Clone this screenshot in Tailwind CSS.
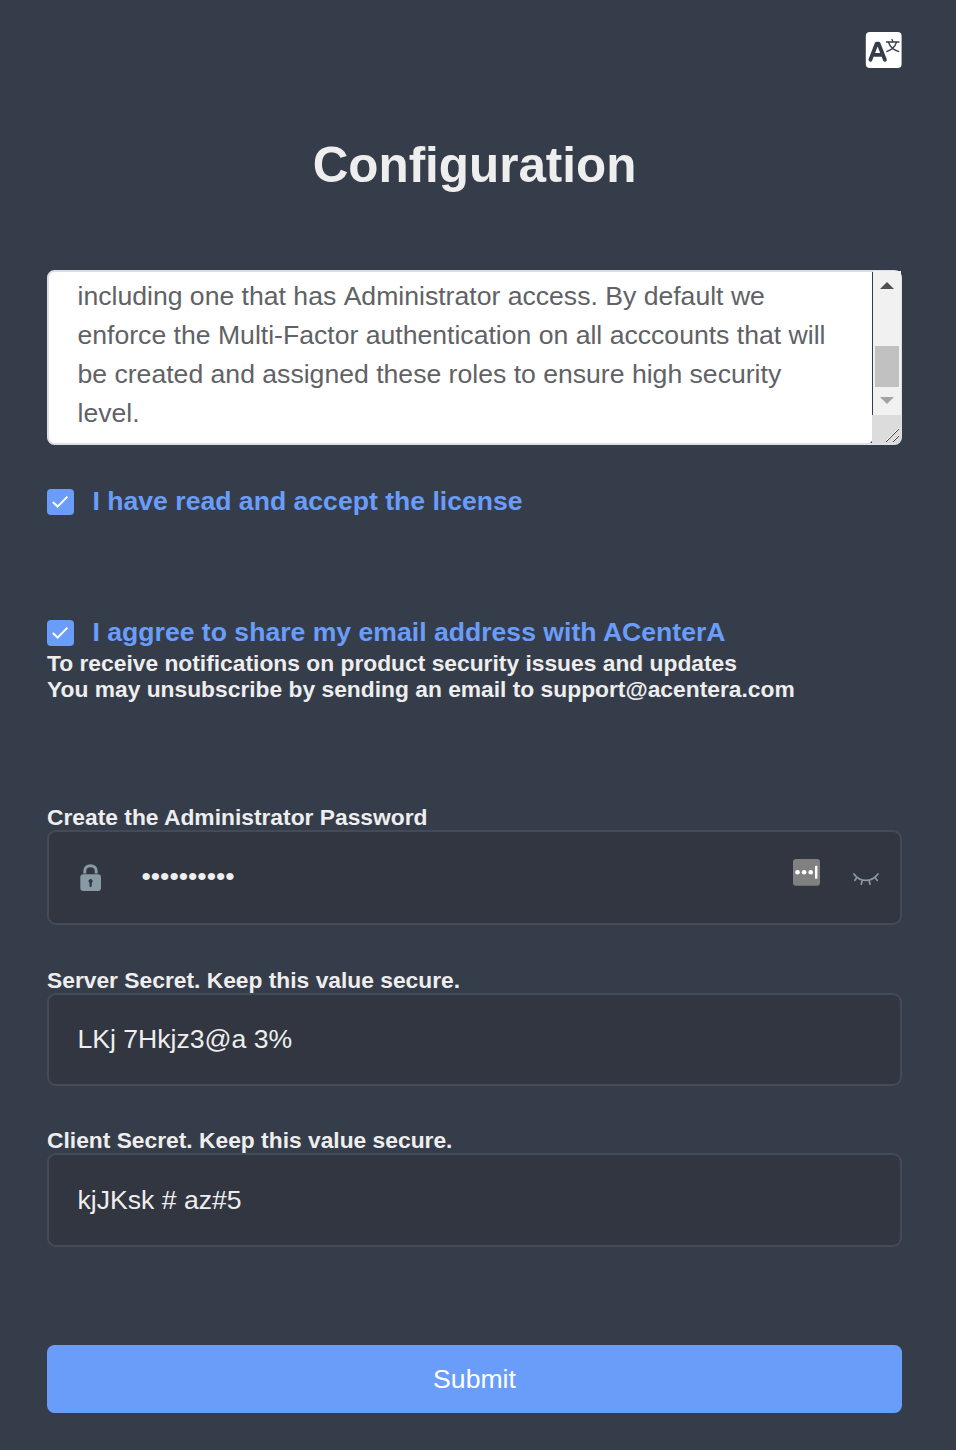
<!DOCTYPE html>
<html lang="en">
<head>
<meta charset="utf-8">
<title>Configuration</title>
<script src="https://cdn.jsdelivr.net/npm/@tailwindcss/browser@4"></script>
</head>
<body class="h-[1450px] overflow-hidden bg-[#363d4a] font-['Liberation_Sans',Arial,sans-serif] text-[#eeeeee]">
<main class="flex h-[1450px] flex-col pt-[32px] pr-[54px] pl-[47px]">
  <header class="flex h-[36px] justify-end">
    <svg class="h-[36px] w-[37px]" viewBox="0 0 37 36" fill="none">
      <rect x="0.8" width="35.8" height="36" rx="4" fill="#fff"/>
      <path d="M5.4 27.7 11.6 11.7h2L19.9 27.7M8 22.8h9.6" stroke="#363d4a" stroke-width="3.8" stroke-linecap="round" stroke-linejoin="round"/>
      <path d="M26.8 7 27.8 9.3M21 10H34.4M31.4 10.5C30 15 26.5 18 21.3 19.6M23.6 10.5C25 15 28.5 18 34.2 19.6" stroke="#363d4a" stroke-width="1.3"/>
    </svg>
  </header>
  <h1 class="mt-[69px] h-[56px] text-center text-[49.4px] leading-[56px] font-bold">Configuration</h1>

  <div class="mt-[77px] flex h-[175px] shrink-0 rounded-[7.5px] border-2 border-[#dcdfe6] bg-white">
    <div class="w-[823px] pt-[4.5px] pl-[28.5px] text-[26.6px] leading-[39px] whitespace-nowrap text-[#606266]">
      <p class="[font-kerning:none]">including one that has Administrator access. By default we</p>
      <p>enforce the Multi-Factor authentication on all acccounts that will</p>
      <p>be created and assigned these roles to ensure high security</p>
      <p>level.</p>
    </div>
    <svg class="h-[171px] w-[28px] shrink-0 overflow-visible" viewBox="0 0 28 171" fill="none">
      <path d="M1-1H29V143H1z" fill="#f1f1f1"/>
      <path d="M0 0H1V143H0z" fill="#363d4a"/>
      <path d="M3 74H27V115H3z" fill="#c1c1c1"/>
      <path d="M8 17 15 10 22 17z" fill="#505050"/>
      <path d="M8 125 15 132 22 125z" fill="#a3a3a3"/>
      <path d="M0 143H29V168L26 171H0z" fill="#dcdcdc"/>
      <path d="M-2 171H0V169z" fill="#363d4a"/>
      <path d="M15 170 28 157M22 170 28 164" stroke="#fff" stroke-width="1" transform="translate(-1 -1)"/>
      <path d="M14 170 27 157M21 170 27 164" stroke="#444" stroke-width="1"/>
    </svg>
  </div>

  <label class="mt-[43px] flex h-[28px] items-center">
    <svg class="h-[26px] w-[27px]" viewBox="0 0 27 26" fill="none"><rect width="27" height="26" rx="4" fill="#6a9df9"/><path d="M5.8 13.1 10.6 17.6 20.4 7.6" stroke="#fff" stroke-width="2"/></svg>
    <span class="mb-[2px] ml-[18.5px] text-[26.6px] leading-[28px] font-bold text-[#6a9df9]">I have read and accept the license</span>
  </label>

  <label class="mt-[103px] flex h-[28px] items-center">
    <svg class="h-[26px] w-[27px]" viewBox="0 0 27 26" fill="none"><rect width="27" height="26" rx="4" fill="#6a9df9"/><path d="M5.8 13.1 10.6 17.6 20.4 7.6" stroke="#fff" stroke-width="2"/></svg>
    <span class="mb-[2px] ml-[18.5px] text-[26.6px] leading-[28px] font-bold text-[#6a9df9]">I aggree to share my email address with ACenterA</span>
  </label>
  <p class="mt-[3px] text-[22.8px] leading-[26px] font-bold whitespace-nowrap">To receive notifications on product security issues and updates<br>You may unsubscribe by sending an email to support@acentera.com</p>

  <h2 class="mt-[102px] h-[26px] text-[22.8px] leading-[26px] font-bold">Create the Administrator Password</h2>
  <div class="flex h-[95px] items-start rounded-[9px] border-2 border-[#454a57] bg-[#313641]">
    <svg class="mt-[32px] ml-[31px] h-[28px] w-[22px]" viewBox="0 0 22 28" fill="none">
      <path d="M4.8 9.5V7C4.8 3.8 7.1 1.8 10.5 1.8S16.2 3.8 16.2 7V9.5" stroke="#889aa4" stroke-width="3"/>
      <rect x="0.3" y="10.3" width="20.7" height="16.7" rx="3" fill="#889aa4"/>
      <path d="M10.6 15a2.1 2.1 0 0 1 1.1 3.9v3a1.1 1.1 0 0 1-2.2 0v-3A2.1 2.1 0 0 1 10.6 15z" fill="#313641"/>
    </svg>
    <span class="mt-[29px] ml-[39.5px] text-[26.6px] leading-[30px] text-[#eeeeee]">••••••••••</span>
    <svg class="mt-[27px] ml-auto h-[27px] w-[27px]" viewBox="0 0 27 27">
      <rect width="27" height="26.7" rx="3" fill="#808080"/>
      <g fill="#fff"><circle cx="4.5" cy="13.3" r="2.3"/><circle cx="11.1" cy="13.3" r="2.3"/><circle cx="17.7" cy="13.3" r="2.3"/><rect x="22" y="6.8" width="2.4" height="13" rx=".7"/></g>
    </svg>
    <svg class="mt-[40px] mr-[21px] ml-[32px] h-[14px] w-[27px]" viewBox="0 0 27 14" fill="none" stroke="#889aa4" stroke-width="1.7" stroke-linecap="round">
      <path d="M1.9 2C7.8 10.5 19.7 10.5 26 2M5 5.2 2.9 8.3M10.3 8.3 9.3 12.2M17 8.3 18.1 12.2M22.7 5.4 25.2 8.3"/>
    </svg>
  </div>

  <h2 class="mt-[42px] h-[26px] text-[22.8px] leading-[26px] font-bold">Server Secret. Keep this value secure.</h2>
  <div class="flex h-[93px] items-center rounded-[9px] border-2 border-[#454a57] bg-[#313641] pl-[28.5px] text-[26.6px]">LKj 7Hkjz3@a 3%</div>

  <h2 class="mt-[41px] h-[26px] text-[22.8px] leading-[26px] font-bold">Client Secret. Keep this value secure.</h2>
  <div class="flex h-[94px] items-center rounded-[9px] border-2 border-[#454a57] bg-[#313641] pt-[2px] pl-[28.5px] text-[26.6px]">kjJKsk # az#5</div>

  <button class="mt-[98px] h-[68px] shrink-0 rounded-[7.5px] bg-[#6a9df9] pt-[2px] text-[26.6px] text-white">Submit</button>
</main>
</body>
</html>
